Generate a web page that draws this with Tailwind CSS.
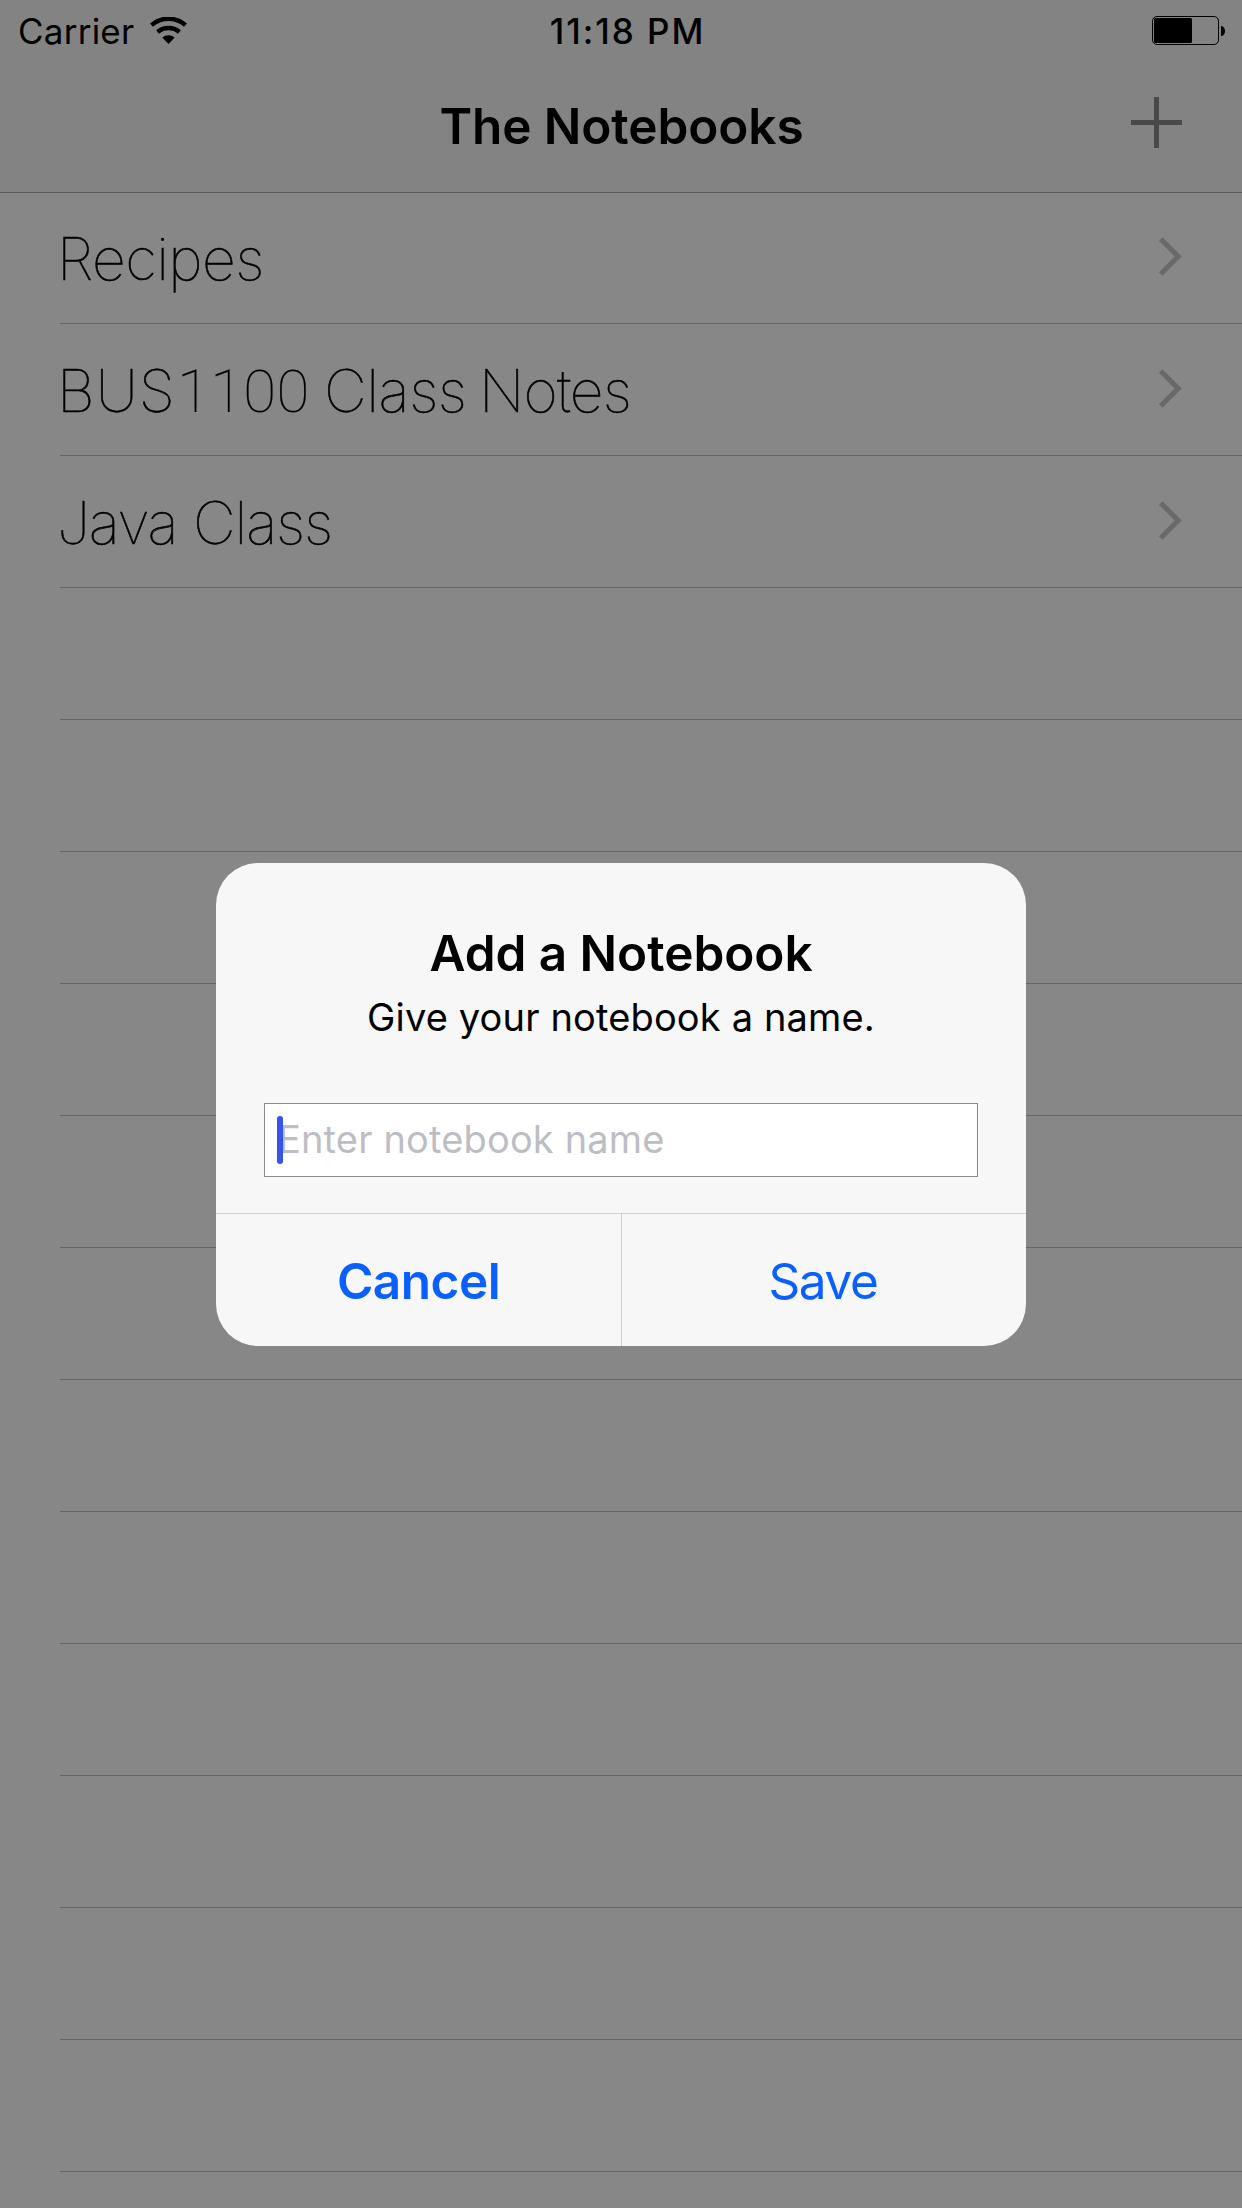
<!DOCTYPE html>
<html lang="en">
<head>
<meta charset="utf-8">
<title>The Notebooks</title>
<script src="https://cdn.jsdelivr.net/npm/@tailwindcss/browser@4"></script>
</head>
<body class="bg-[#878787]">
<div class="relative flex h-[2208px] w-[1242px] flex-col overflow-hidden bg-[#878787] font-['Inter',sans-serif] text-black">

  <header class="h-[192px] bg-[#838383]">
    <!-- Status bar -->
    <div class="grid h-[60px] grid-cols-3 items-center text-[35px] leading-none">
      <div class="flex items-center pl-[18px]">
        <span class="pt-[2px] tracking-[0.24px]">Carrier</span>
        <svg class="ml-[16px] h-[27px] w-[37px]" viewBox="0 0 37 27" fill="none" stroke="#000">
          <path d="M1.5 8.2 A25.5 25.5 0 0 1 35.5 8.2" stroke-width="4.4"/>
          <path d="M7.6 15 A17 17 0 0 1 29.4 15" stroke-width="4.4"/>
          <path d="M18.5 27 L12.3 20.6 A9.5 9.5 0 0 1 24.7 20.6 Z" fill="#000" stroke="none"/>
        </svg>
      </div>
      <div class="pt-[2px] pl-[13px] text-center font-medium tracking-[1.95px]">11:18 PM</div>
      <svg class="mr-[16px] h-[29px] w-[74px] justify-self-end" viewBox="0 0 74 29">
        <rect x="0.5" y="0.5" width="66" height="28" rx="4.5" fill="none" stroke="#000"/>
        <rect x="2" y="2" width="38" height="25" rx="1.5"/>
        <path d="M69 10 h1 q3 1.5 3 5 t-3 5 h-1 z"/>
      </svg>
    </div>
    <!-- Navigation bar -->
    <div class="grid h-[132px] grid-cols-[1fr_auto_1fr] items-center leading-none">
      <span></span>
      <h1 class="pt-[2px] pl-px text-[49.5px] font-semibold tracking-[-0.09px]">The Notebooks</h1>
      <svg class="mr-[60px] mb-[7px] h-[51px] w-[51px] justify-self-end" viewBox="0 0 51 51" fill="#494949">
        <path d="M23 0h5v23h23v5H28v23h-5V28H0v-5h23z"/>
      </svg>
    </div>
  </header>

  <!-- Notebook list -->
  <ul class="flex flex-col border-t border-[#5a5a5a] text-[59px] leading-none font-thin [-webkit-text-stroke:0.6px_#000]">
    <li class="ml-[60px] flex h-[131px] items-center justify-between border-b border-[#666668] pr-[60px]">
      <span class="-ml-[3px] tracking-[-0.6px]">Recipes</span>
      <svg class="mb-[3px] h-[39px] w-[24px]" viewBox="0 0 24 39" fill="none" stroke="#69696b" stroke-width="5"><path d="M2.7 2 L20.2 19.5 L2.7 37"/></svg>
    </li>
    <li class="ml-[60px] flex h-[132px] items-center justify-between border-b border-[#666668] pr-[60px]">
      <span class="-ml-[3px] flex items-baseline pt-[3px]">
        <span class="w-[120px] tracking-[0.8px]">BUS</span>
        <span class="w-[147px] font-['Roboto'] text-[60px] tracking-[0.3px] [-webkit-text-stroke:0.2px_#000]">1100</span>
        <span class="w-[155px] tracking-[-0.4px]">Class</span>
        <span class="tracking-[-0.9px]">Notes</span>
      </span>
      <svg class="mb-[3px] h-[39px] w-[24px]" viewBox="0 0 24 39" fill="none" stroke="#69696b" stroke-width="5"><path d="M2.7 2 L20.2 19.5 L2.7 37"/></svg>
    </li>
    <li class="ml-[60px] flex h-[132px] items-center justify-between border-b border-[#666668] pr-[60px]">
      <span class="-ml-[3px] pt-px tracking-[-1.1px]">Java Class</span>
      <svg class="mb-[3px] h-[39px] w-[24px]" viewBox="0 0 24 39" fill="none" stroke="#69696b" stroke-width="5"><path d="M2.7 2 L20.2 19.5 L2.7 37"/></svg>
    </li>
    <li class="ml-[60px] h-[132px] border-b border-[#666668]"></li>
    <li class="ml-[60px] h-[132px] border-b border-[#666668]"></li>
    <li class="ml-[60px] h-[132px] border-b border-[#666668]"></li>
    <li class="ml-[60px] h-[132px] border-b border-[#666668]"></li>
    <li class="ml-[60px] h-[132px] border-b border-[#666668]"></li>
    <li class="ml-[60px] h-[132px] border-b border-[#666668]"></li>
    <li class="ml-[60px] h-[132px] border-b border-[#666668]"></li>
    <li class="ml-[60px] h-[132px] border-b border-[#666668]"></li>
    <li class="ml-[60px] h-[132px] border-b border-[#666668]"></li>
    <li class="ml-[60px] h-[132px] border-b border-[#666668]"></li>
    <li class="ml-[60px] h-[132px] border-b border-[#666668]"></li>
    <li class="ml-[60px] h-[132px] border-b border-[#666668]"></li>
  </ul>

  <!-- Alert -->
  <div class="absolute inset-0 flex items-center justify-center pt-px">
    <div class="flex h-[483px] w-[810px] flex-col overflow-hidden rounded-[42px] bg-[#f7f7f7] pt-[59px] text-center leading-none">
      <h2 class="flex h-[61px] items-center justify-center pt-[2px] text-[49.5px] font-semibold tracking-[-0.04px]">Add a Notebook</h2>
      <p class="flex h-[68px] items-center justify-center text-[38px] tracking-[0.15px]">Give your notebook a name.</p>
      <div class="relative mx-[48px] mt-[52px] flex h-[74px] items-center border border-[#8b8b8b] bg-white pb-[2px] pl-[13px] text-[38px] tracking-[0.16px] text-[#bdbdc4]">
        Enter notebook name
        <span class="absolute top-[12px] left-[12px] h-[48px] w-[6px] rounded-full bg-[#3653f0]"></span>
      </div>
      <div class="mt-[36px] grid h-[133px] grid-cols-2 border-t border-[#cfcfd1] text-[49.5px] text-[#0a60ff]">
        <button class="pt-[3px] font-semibold tracking-[-0.5px]">Cancel</button>
        <button class="border-l border-[#cfcfd1] pt-[3px] pr-[2px] tracking-[-1.4px]">Save</button>
      </div>
    </div>
  </div>
</div>
</body>
</html>
